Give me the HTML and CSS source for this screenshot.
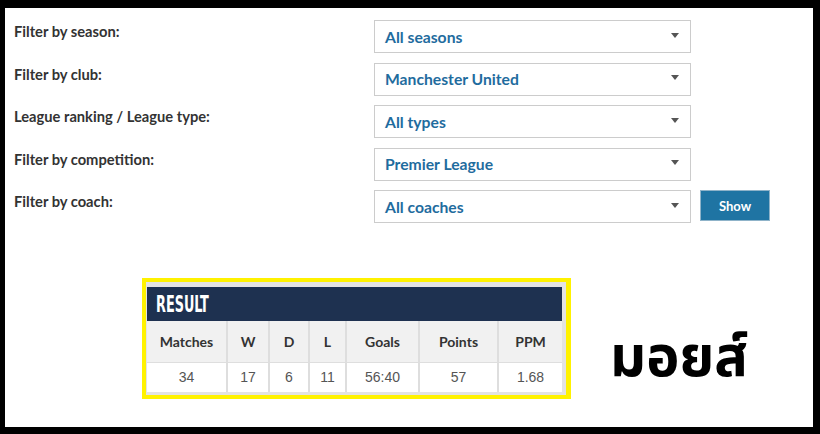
FILE: index.html
```html
<!DOCTYPE html>
<html lang="en">
<head>
    <meta charset="UTF-8">
    <meta name="viewport" content="width=device-width, initial-scale=1.0">
    <title>Manager Stats</title>
    <link rel="stylesheet" href="styles.css">
</head>
<body>

    <div class="frame">
        <form class="filters">
            <label>Filter by season:</label>
            <div class="select"><span>All seasons</span><i class="arrow"></i></div>
            <span></span>

            <label>Filter by club:</label>
            <div class="select"><span>Manchester United</span><i class="arrow"></i></div>
            <span></span>

            <label>League ranking / League type:</label>
            <div class="select"><span>All types</span><i class="arrow"></i></div>
            <span></span>

            <label>Filter by competition:</label>
            <div class="select"><span>Premier League</span><i class="arrow"></i></div>
            <span></span>

            <label>Filter by coach:</label>
            <div class="select"><span>All coaches</span><i class="arrow"></i></div>
            <button type="button" class="show-btn">Show</button>
        </form>

        <div class="lower">
            <div class="result">
                <div class="result-inner">
                    <div class="result-title"><span>RESULT</span></div>
                    <table>
                        <tr class="head">
                            <th class="c-matches">Matches</th>
                            <th class="c-w">W</th>
                            <th class="c-d">D</th>
                            <th class="c-l">L</th>
                            <th class="c-goals">Goals</th>
                            <th class="c-points">Points</th>
                            <th class="c-ppm">PPM</th>
                        </tr>
                        <tr class="data">
                            <td>34</td>
                            <td>17</td>
                            <td>6</td>
                            <td>11</td>
                            <td>56:40</td>
                            <td>57</td>
                            <td>1.68</td>
                        </tr>
                    </table>
                </div>
            </div>
            <div class="thai">มอยส์</div>
        </div>
    </div>

</body>
</html>
```

FILE: styles.css
```css
* { box-sizing: border-box; }
body { margin: 0; font-family: Lato, "Open Sans", sans-serif; background: #fff; }

.frame { width: 820px; height: 434px; border-style: solid; border-color: #000; border-width: 8px 7px 7px 5px; padding: 12px 0 0 9px; }

.filters { display: grid; grid-template-columns: 351px 317px auto; row-gap: 9.5px; column-gap: 9px; align-items: start; }
.filters label { font-size: 14.7px; font-weight: bold; color: #333; line-height: 20px; padding-top: 1px; }
.select { height: 33px; border: 1px solid #ccc; display: flex; align-items: center; justify-content: space-between; padding: 0 11px 0 10px; font-size: 15.7px; font-weight: bold; color: #1f6c9e; }
.arrow { width: 0; height: 0; border-left: 4.5px solid transparent; border-right: 4.5px solid transparent; border-top: 5px solid #555; margin-top: -3px; }
.show-btn { width: 70px; height: 31px; background: #1f74a3; border: 1px solid #8fb3c9; color: #fff; font-family: Lato, sans-serif; font-size: 13px; font-weight: bold; padding: 0; }

.lower { display: flex; align-items: center; margin-top: 55px; }
.result { margin-left: 128px; border: 4px solid #fff200; border-right-width: 5px; }
.result-inner { background: #e3e3e3; padding: 5px 4px 3px 1px; }
.result-title { background: #1e3150; height: 34px; padding-left: 9px; display: flex; align-items: center; }
.result-title span { display: inline-block; color: #fff; font-family: "DejaVu Sans Condensed", "DejaVu Sans", sans-serif; font-size: 23px; font-weight: bold; transform: scaleX(0.62); transform-origin: left center; }

table { border-collapse: collapse; width: 415px; table-layout: fixed; }
th, td { border-left: 2px solid #dedede; border-right: 2px solid #dedede; text-align: center; padding: 0; }
tr th:first-child, tr td:first-child { border-left: none; }
tr th:last-child, tr td:last-child { border-right: none; }
.head th { height: 41px; background: #f1f1f1; font-size: 14px; font-weight: bold; color: #333; border-bottom: 1px solid #dedede; }
.data td { height: 30px; background: #fff; font-family: "Liberation Sans", Arial, sans-serif; font-size: 14px; color: #555; }
.c-matches { width: 80px; }
.c-w { width: 42px; }
.c-d { width: 40px; }
.c-l { width: 37px; }
.c-goals { width: 73px; }
.c-points { width: 79px; }
.c-ppm { width: 64px; }

.thai { margin-left: 39px; margin-top: 40px; font-family: "Noto Sans Thai", Tahoma, "DejaVu Sans", sans-serif; font-size: 56px; font-weight: bold; color: #000; line-height: 1; }
```
